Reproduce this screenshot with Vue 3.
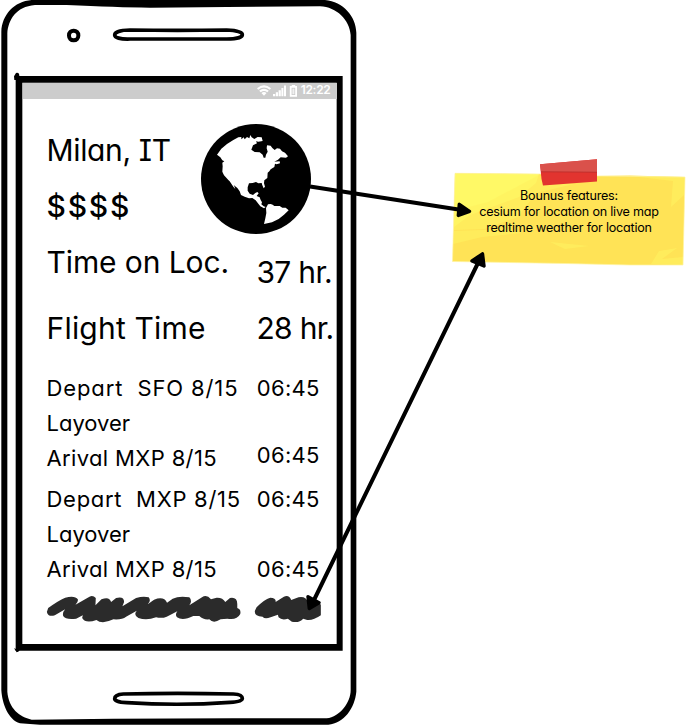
<script setup>
const flights = [
  { depart: 'Depart\u00a0 SFO 8/15', tone: 'sfo', departTime: '06:45', arriveTime: '06:45', shifted: true },
  { depart: 'Depart\u00a0 MXP 8/15', tone: 'mxp', departTime: '06:45', arriveTime: '06:45', shifted: false },
]
const noteLines = [
  { text: 'Bounus features:', tone: 'first' },
  { text: 'cesium for location on live map', tone: 'second' },
  { text: 'realtime weather for location', tone: 'third' },
]
</script>

<template>
  <main class="board">
    <section class="phone">
      <svg class="shell" viewBox="0 0 1080 2175" aria-hidden="true">
        <path
          fill-rule="evenodd"
          d="M4 95C6 45 42 4 95 0H975C1030 5 1068 50 1069 98V2075C1064 2125 1032 2169 985 2174H120L60 2170C25 2160 6 2110 4 2070ZM22 100C25 60 47 20 105 15H200Q350 22 450 23L680 21L960 19C1010 21 1049 60 1052 105V2070C1052 2108 1020 2150 980 2155H700L340 2156L95 2159C58 2150 26 2125 22 2075Z"
        />
        <rect x="207" y="92" width="28" height="29" rx="13.5" fill="none" stroke="#000" stroke-width="12" />
        <path class="slot" d="M390 90Q530 92 680 90C710 91 727 97 727 104S710 117 680 117H390C360 118 344 113 344 105S360 90 390 90Z" />
        <path class="slot" d="M370 2082Q530 2078 700 2082C720 2083 727 2089 727 2095S720 2106 690 2107Q540 2118 380 2108C355 2107 344 2101 344 2096S350 2083 370 2082Z" />
        <path fill-rule="evenodd" d="M47 228H1028V1952H47ZM67 248V1932H1010V248Z" />
        <path d="M42 229L48 219Q53 217 57 221L60 240H43ZM42 1945L50 1957Q55 1957 59 1951Z" />
      </svg>

      <div class="screen">
        <header class="status">
          <svg class="status-icons" viewBox="0 0 42 14" fill="#fff">
            <path d="M0 4.3Q7-1.6 14 4.3L12.8 5.8Q7 1.2 1.2 5.8ZM2.2 6.7Q7 3 11.8 6.7L10.3 8.3Q7 5.8 3.7 8.3ZM4.4 9Q7 7 9.6 9L7 11.8Z" />
            <path d="M16 10h2.2v2.3H16zM18.8 8.3H21v4h-2.2zM21.6 6.2h2.2v6.1h-2.2zM24.4 4h2v8.3h-2zM27 1.5h2v10.8h-2z" />
            <path fill-rule="evenodd" d="M34.8 1h3.4v1h1.8v10.8h-7.2V2h2zM34.6 3.8v7.2h3.6V3.8z" />
            <path d="M35.4 4.6h2v5.6h-2z" opacity=".7" />
          </svg>
          <span class="clock">12:22</span>
        </header>

        <div class="content">
          <div class="intro">
            <div>
              <h1 class="big city">Milan, IT</h1>
              <p class="big cost">$$$$</p>
            </div>
            <svg class="globe" viewBox="33 42 330 330">
              <ellipse cx="198" cy="207" rx="165" ry="165" />
              <path
                fill="#fff"
                d="M81 134L94 116L111 102L130 90L145 82L154 81V88L161 82L164 88L171 81L178 85L181 75L185 82L193 87L203 81L215 82L218 93L205 95L198 94L201 100L189 106L184 119L194 126L209 127L218 134L221 143L226 143L228 134L233 125L230 115L231 106L242 107L247 114L254 120L261 115L270 116L276 124L285 128L294 139L288 143L272 142L264 149L253 155L269 154L270 160L260 163L255 161L253 171L242 178L238 184L233 188L232 204L223 211L222 220L225 230L221 235L217 226L215 219L205 220L198 216L188 219L177 220L173 232L173 242L179 251L189 255L196 249L202 246L206 250L200 258L209 262L212 270L216 277L214 283L221 289L227 291L222 295L211 289L205 281L197 271L187 264L177 265L164 260L153 255L149 244L142 234L131 225L123 211L133 229L136 237L130 230L119 214L115 210L102 196L97 185L98 169L97 158L103 154L97 151L91 142ZM228 294L234 283L242 282L248 284L253 288L269 288L277 293L287 293L296 301L282 314L266 327L246 337L222 342L226 325L229 309Z"
              />
            </svg>
          </div>

          <div class="totals">
            <div class="total">
              <span class="big stay">Time on Loc.</span>
              <span class="big hours lowered">37 hr.</span>
            </div>
            <div class="total">
              <span class="big flight">Flight Time</span>
              <span class="big hours">28 hr.</span>
            </div>
          </div>

          <section v-for="leg in flights" :key="leg.tone" class="leg">
            <div class="row">
              <span :class="leg.tone">{{ leg.depart }}</span>
              <time>{{ leg.departTime }}</time>
            </div>
            <div class="row"><span class="layover">Layover</span></div>
            <div class="row">
              <span class="arrival">Arival MXP 8/15</span>
              <time :class="{ raised: leg.shifted }">{{ leg.arriveTime }}</time>
            </div>
          </section>

          <svg class="scribbles" viewBox="45 15 830 85">
            <g fill="#2b2b2b">
              <path d="M54 54Q84 32 105 23Q135 16 143 28Q145 36 136 44L178 20Q188 14 197 24L196 46L214 28Q238 18 243 36L258 24Q282 18 282 36L277 49L318 24Q340 17 356 22Q364 32 353 43L372 29Q402 18 411 38L428 26Q447 17 478 22Q488 33 478 46L516 22Q530 12 543 28L560 23Q578 22 586 36L600 24Q622 20 622 42L622 54Q634 58 631 72Q620 92 592 86L572 88Q550 102 538 88Q520 90 508 78L490 78Q458 94 441 82Q434 74 442 64L410 80Q396 86 378 82Q350 92 325 84Q309 76 320 62L288 80Q276 90 250 88Q216 104 199 90Q166 102 156 84L158 76L138 86Q106 90 99 78Q96 68 105 58L74 76Q54 82 50 66Z" />
              <path d="M680 52Q703 28 721 23Q740 24 737 36L762 20Q778 14 784 30L806 22Q828 18 834 36Q850 26 862 32L873 44V76Q850 92 832 90L820 86Q808 100 786 95L774 86Q756 92 746 82L744 74L722 82Q704 88 698 80Q672 80 675 62Z" />
            </g>
          </svg>
        </div>
      </div>
    </section>

    <aside class="note">
      <svg class="paper" viewBox="0 0 246 125" preserveAspectRatio="none" aria-hidden="true">
        <path fill="#ffe356" d="M15 23.3L99 24L157 26L190 25.5L245 27L243 115L190 115L125 113.5L12.5 111.5Z" />
        <path fill="#fff966" d="M15 23.3L99 24L96 33L79 47L49 58L30 65L14 77Z" />
        <path fill="#fff160" opacity=".65" d="M99 25L134 34L96 43L78 67L44 79L14 80L14 61L48 52ZM14 81L69 79L82 83L42 87L13 94ZM190 26L245 27L244 45L231 57L233 31ZM211 114L219 101L237 98L222 109L243 107L243 115ZM110 92L149 96L125 99Z" />
        <path fill="none" stroke="#fff3a0" stroke-width=".7" d="M15 23.3L99 24L157 26L245 27L243 115L190 115L125 113.5L12.5 111.5Z" />
        <path fill="#e2342f" d="M100 14.3L157 9.3V31.6L103 35.5L101.5 29Z" />
        <path fill="#da514b" d="M100 14.3L157 9.3V22L101 21.5Z" />
        <path fill="none" stroke="#a92b2a" stroke-width=".6" d="M101 21.8L157 22.2" />
      </svg>
      <div class="note-text">
        <p v-for="line in noteLines" :key="line.tone" :class="line.tone">{{ line.text }}</p>
      </div>
    </aside>

    <svg class="arrows" viewBox="0 0 686 725" aria-hidden="true">
      <g stroke="#000" stroke-linejoin="round">
        <path fill="none" stroke-width="4" d="M310 186.5L460 209.7M478 263L314 600" />
        <path stroke-width="3.4" d="M469.5 211.3L459.3 204.3L458.3 215.5ZM482.5 253.8L472 261L484 266ZM309.3 608.5L308 596.7L319 602.7Z" />
      </g>
    </svg>
  </main>
</template>

<style>
body {
  margin: 0;
  background: #fff;
}
</style>

<style scoped>
.board {
  position: relative;
  width: 686px;
  height: 725px;
  overflow: hidden;
  color: #000;
  font-family: Inter, "Liberation Sans", sans-serif;
  font-feature-settings: "cv11", "cv08", "calt" 0;
}
.phone {
  position: absolute;
  left: 0;
  top: 0;
  width: 360px;
  height: 725px;
}
.shell {
  position: absolute;
  inset: 0;
  width: 360px;
  height: 725px;
}
.slot {
  fill: none;
  stroke: #000;
  stroke-width: 11;
}
.screen {
  position: relative;
  margin: 82.7px 0 0 22.5px;
  width: 314px;
  height: 561px;
}
.status {
  display: flex;
  justify-content: flex-end;
  align-items: center;
  height: 16.3px;
  padding-right: 6px;
  background: #ccc;
}
.status-icons {
  width: 42px;
  height: 14px;
  margin-right: 2px;
}
.clock {
  color: #fff;
  font-size: 12px;
  font-weight: 600;
  line-height: 16px;
  letter-spacing: -0.3px;
  margin-top: -1px;
}
.content {
  padding: 25.3px 0 0 24px;
}
h1,
p {
  margin: 0;
}
.big {
  display: block;
  font-size: 30px;
  font-weight: 400;
  line-height: 40px;
  white-space: pre;
}
.intro {
  display: grid;
  grid-template-columns: 154.5px 110px;
  height: 118px;
}
.city {
  margin-top: 6px;
  letter-spacing: -0.35px;
}
.cost {
  margin-top: 16px;
  font-weight: 500;
  letter-spacing: 1.8px;
}
.stay {
  letter-spacing: -0.1px;
}
.flight {
  letter-spacing: 0.2px;
}
.globe {
  width: 110px;
  height: 110px;
}
.total {
  display: grid;
  grid-template-columns: 210px 90px;
  height: 66.2px;
}
.lowered {
  margin-top: 9.5px;
}
.hours {
  letter-spacing: -0.7px;
}
.leg {
  height: 111px;
  font-size: 22px;
  line-height: 35px;
}
.totals {
  height: 128.5px;
}
.row {
  display: grid;
  grid-template-columns: 210.3px 80px;
  height: 35px;
  white-space: pre;
}
.row time {
  letter-spacing: 0.3px;
}
.sfo {
  letter-spacing: 0.88px;
}
.mxp {
  letter-spacing: 0.72px;
}
.arrival {
  letter-spacing: 0.36px;
}
.raised {
  margin-top: -3px;
}
.scribbles {
  display: block;
  width: 276.7px;
  height: 28.3px;
  margin: 2px 0 0 -1.5px;
}
.note {
  position: absolute;
  left: 440px;
  top: 150px;
  width: 246px;
  height: 125px;
}
.paper {
  position: absolute;
  inset: 0;
  width: 246px;
  height: 125px;
}
.note-text {
  position: relative;
  padding: 37.6px 0 0 12px;
  font-size: 12.6px;
  line-height: 16.2px;
  letter-spacing: -0.22px;
  text-align: center;
  white-space: pre;
}
.arrows {
  position: absolute;
  inset: 0;
  width: 686px;
  height: 725px;
}
</style>
